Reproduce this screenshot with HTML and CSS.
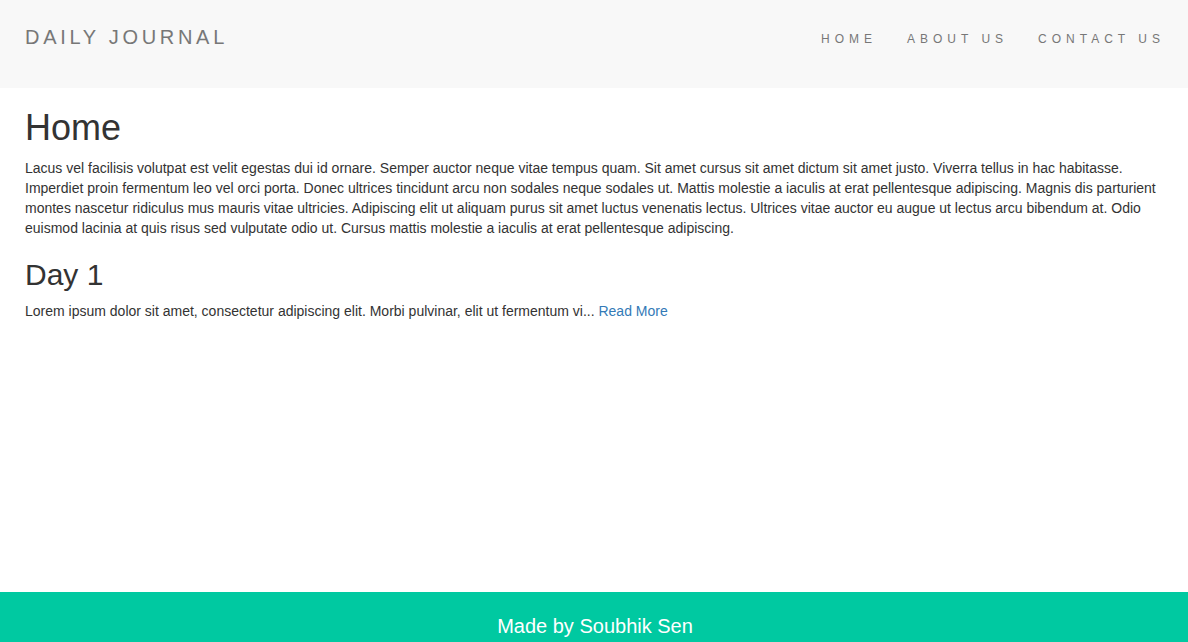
FILE: index.html
```html
<!DOCTYPE html>
<html lang="en">
<head>
<meta charset="utf-8">
<title>Daily Journal</title>
<link rel="stylesheet" href="styles.css">
</head>
<body>
  <nav class="navbar">
    <a class="brand" href="#">DAILY JOURNAL</a>
    <ul class="nav-links">
      <li><a href="#">HOME</a></li>
      <li><a href="#">ABOUT US</a></li>
      <li><a href="#">CONTACT US</a></li>
    </ul>
  </nav>
  <main class="content">
    <h1>Home</h1>
    <p>Lacus vel facilisis volutpat est velit egestas dui id ornare. Semper auctor neque vitae tempus quam. Sit amet cursus sit amet dictum sit amet justo. Viverra tellus in hac habitasse. Imperdiet proin fermentum leo vel orci porta. Donec ultrices tincidunt arcu non sodales neque sodales ut. Mattis molestie a iaculis at erat pellentesque adipiscing. Magnis dis parturient montes nascetur ridiculus mus mauris vitae ultricies. Adipiscing elit ut aliquam purus sit amet luctus venenatis lectus. Ultrices vitae auctor eu augue ut lectus arcu bibendum at. Odio euismod lacinia at quis risus sed vulputate odio ut. Cursus mattis molestie a iaculis at erat pellentesque adipiscing.</p>
    <h2>Day 1</h2>
    <p>Lorem ipsum dolor sit amet, consectetur adipiscing elit. Morbi pulvinar, elit ut fermentum vi... <a class="read-more" href="#">Read More</a></p>
  </main>
  <footer class="footer">
    <p class="footer-text">Made by Soubhik Sen</p>
  </footer>
</body>
</html>
```

FILE: styles.css
```css
html, body {
  margin: 0;
  padding: 0;
  height: 100%;
}

body {
  font-family: "Liberation Sans", Arial, Helvetica, sans-serif;
  font-size: 14px;
  line-height: 20px;
  color: #333333;
  background: #ffffff;
  display: flex;
  flex-direction: column;
  min-height: 100vh;
}

a {
  text-decoration: none;
}

.navbar {
  box-sizing: border-box;
  height: 88px;
  background: #f8f8f8;
  display: flex;
  justify-content: space-between;
  align-items: flex-start;
  padding: 27px 23px 0 25px;
}

.brand {
  font-size: 20px;
  line-height: 20px;
  letter-spacing: 3.7px;
  color: #777777;
}

.nav-links {
  list-style: none;
  margin: 1px 0 0 0;
  padding: 0;
  display: flex;
  gap: 30px;
}

.nav-links a {
  font-size: 12px;
  line-height: 20px;
  letter-spacing: 5px;
  color: #777777;
}

.content {
  flex: 1;
  padding: 0 25px;
}

.content h1 {
  font-size: 36px;
  font-weight: 500;
  line-height: 1.1;
  margin: 20px 0 10px;
}

.content h2 {
  font-size: 30px;
  font-weight: 500;
  line-height: 1.1;
  margin: 20px 0 10px;
}

.content p {
  margin: 0 0 10px;
}

.read-more {
  color: #337ab7;
}

.footer {
  box-sizing: border-box;
  height: 50px;
  background: #00c9a1;
  text-align: center;
  padding: 23px 0 0 2px;
}

.footer-text {
  margin: 0;
  font-size: 20px;
  line-height: 22px;
  color: #ffffff;
}
```
